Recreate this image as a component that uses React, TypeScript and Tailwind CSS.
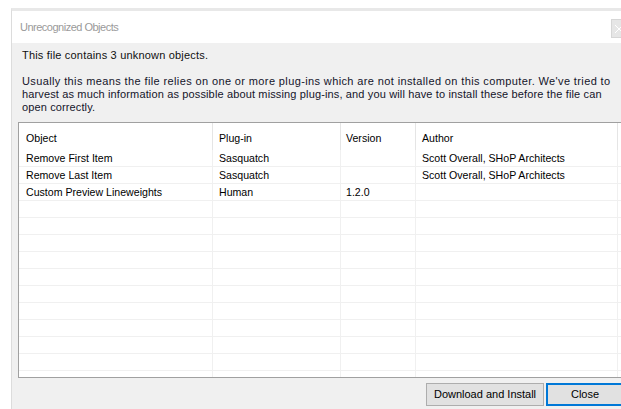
import React from "react";

type Row = [string, string, string, string];

const rows: Row[] = [
  ["Remove First Item", "Sasquatch", "", "Scott Overall, SHoP Architects"],
  ["Remove Last Item", "Sasquatch", "", "Scott Overall, SHoP Architects"],
  ["Custom Preview Lineweights", "Human", "1.2.0", ""],
];

const emptyRows: Row[] = Array.from({ length: 12 }, () => ["", "", "", ""] as Row);

const headers = ["Object", "Plug-in", "Version", "Author", ""];
const cellPad = ["pl-[7px]", "pl-[6px]", "pl-[5px]", "pl-[6px]", "pl-[6px]"];

function CloseGlyph() {
  return (
    <svg width="10" height="10" viewBox="0 0 10 10" className="ml-[2px]">
      <path d="M1 1 L9 9 M9 1 L1 9" stroke="#ffffff" strokeWidth="1" />
    </svg>
  );
}

export default function App() {
  const allRows = [...rows, ...emptyRows];
  return (
    <div
      className="w-[621px] h-[409px] overflow-hidden bg-white pt-[8px] pl-[11px]"
      style={{ fontFamily: '"Liberation Sans", Arial, sans-serif' }}
    >
      <div className="w-[640px] h-[420px] flex flex-col border-t-[3px] border-t-[#e8e8e8] border-l border-l-[#dcdcdc]">
        {/* title bar */}
        <div className="h-[32px] bg-white flex items-center justify-between shrink-0">
          <span className="pl-[8px] text-[11px] tracking-[-0.5px] text-[#9a9a9a] leading-none">Unrecognized Objects</span>
          <div className="mr-[10px] mt-[3px] w-[30px] h-[19px] bg-[#e6e6e6] border border-[#d6d6d6] flex items-center justify-start">
            <CloseGlyph />
          </div>
        </div>

        {/* body */}
        <div className="flex-1 bg-[#f0f0f0] flex flex-col text-[11px] text-[#111]">
          <p className="pl-[10px] pt-[6px] leading-[13px] tracking-[0.19px]">This file contains 3 unknown objects.</p>
          <div className="pl-[10px] mt-[13px] leading-[13px] text-[#14142a] whitespace-nowrap flex flex-col items-start">
            <span className="tracking-[0.38px]">
              Usually this means the file relies on one or more plug-ins which are not installed on this computer. We've tried to
            </span>
            <span className="tracking-[0.14px]">
              harvest as much information as possible about missing plug-ins, and you will have to install these before the file can
            </span>
            <span className="tracking-[0.12px]">open correctly.</span>
          </div>

          {/* object list */}
          <div className="ml-[6px] mt-[8px] h-[256px] w-[620px] overflow-hidden bg-white border border-[#a0a0a0] border-r-0 text-[10.6px]">
            <div className="grid grid-cols-[194px_128px_75px_202px_40px]">
              {headers.map((h, i) => (
                <div
                  key={"h" + i}
                  className={`h-[27px] pt-[4px] flex items-center border-r border-[#e5e5e5] text-black ${cellPad[i]}`}
                >
                  {h}
                </div>
              ))}
              {allRows.map((r, ri) =>
                [...r, ""].map((c, ci) => (
                  <div
                    key={ri + "-" + ci}
                    className={`h-[17px] pt-[1px] flex items-center border-r border-b border-[#f0f0f0] text-black ${cellPad[ci]}`}
                  >
                    {c}
                  </div>
                ))
              )}
            </div>
          </div>

          {/* buttons */}
          <div className="flex mt-[5px] pl-[414px] gap-[2px]">
            <button className="w-[118px] h-[23px] bg-[#e1e1e1] border border-[#adadad] text-[11px] text-black">
              Download and Install
            </button>
            <button className="w-[78px] h-[23px] bg-[#e1e1e1] border-2 border-[#0078d7] text-[11px] text-black">
              Close
            </button>
          </div>
        </div>
      </div>
    </div>
  );
}
